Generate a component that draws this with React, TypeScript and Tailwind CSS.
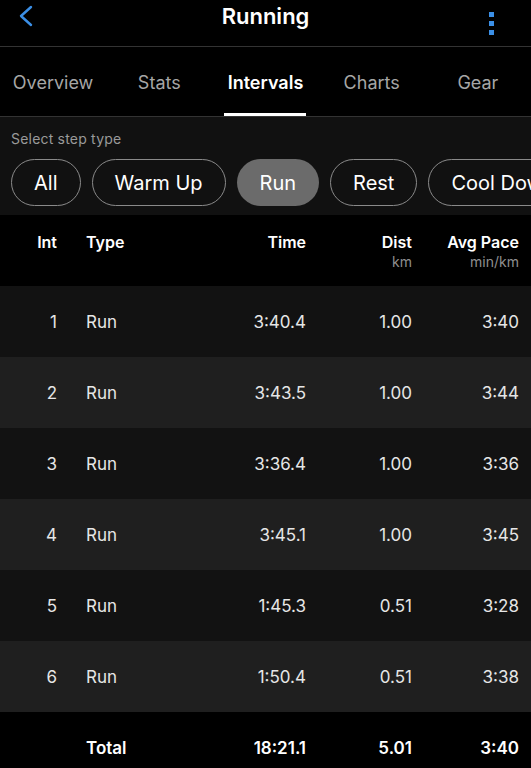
import React from "react";

const rows = [
  { i: "1", t: "3:40.4", d: "1.00", p: "3:40" },
  { i: "2", t: "3:43.5", d: "1.00", p: "3:44" },
  { i: "3", t: "3:36.4", d: "1.00", p: "3:36" },
  { i: "4", t: "3:45.1", d: "1.00", p: "3:45" },
  { i: "5", t: "1:45.3", d: "0.51", p: "3:28" },
  { i: "6", t: "1:50.4", d: "0.51", p: "3:38" },
];

const tabs = ["Overview", "Stats", "Intervals", "Charts", "Gear"];
const pills = ["All", "Warm Up", "Run", "Rest", "Cool Down"];

export default function App() {
  return (
    <div
      className="w-[531px] h-[768px] overflow-hidden bg-black text-white"
      style={{ fontFamily: "Inter, 'Noto Sans', sans-serif" }}
    >
      {/* Top bar */}
      <div className="relative h-[47px] flex items-center justify-center border-b border-[#333]">
        <svg className="absolute left-[18px] top-[5px]" width="16" height="22" viewBox="0 0 16 22">
          <path d="M13 2 L3 11 L13 20" fill="none" stroke="#3b8fe6" strokeWidth="2.4" strokeLinecap="round" strokeLinejoin="round" />
        </svg>
        <div className="text-[22px] font-semibold -mt-[13px]">Running</div>
        <div className="absolute right-[37px] top-[12px] flex flex-col gap-[4px]">
          <div className="w-[5px] h-[5px] bg-[#3b8fe6]" />
          <div className="w-[5px] h-[5px] bg-[#3b8fe6]" />
          <div className="w-[5px] h-[5px] bg-[#3b8fe6]" />
        </div>
      </div>

      {/* Tabs */}
      <div className="grid grid-cols-5 h-[70px] border-b border-[#333]">
        {tabs.map((t) => (
          <div key={t} className="relative flex items-center justify-center pt-[2px]">
            <span className={t === "Intervals" ? "text-[18px] font-semibold text-white" : "text-[18px] text-[#a6a6a6]"}>
              {t}
            </span>
            {t === "Intervals" && (
              <div className="absolute bottom-0 left-1/2 -translate-x-1/2 w-[82px] h-[3px] bg-white" />
            )}
          </div>
        ))}
      </div>

      {/* Filter */}
      <div className="bg-[#111] h-[98px] pt-[11px]">
        <div className="px-[11px] text-[14px] text-[#9a9a9a] tracking-[0.2px]">Select step type</div>
        <div className="flex gap-[11px] pl-[11px] mt-[10px] whitespace-nowrap">
          {pills.map((p) => (
            <div
              key={p}
              className={
                p === "Run"
                  ? "h-[47px] px-[23px] rounded-full bg-[#6b6b6b] flex items-center text-[20px] shrink-0"
                  : "h-[47px] px-[22px] rounded-full border border-[#8a8a8a] flex items-center text-[20px] shrink-0"
              }
            >
              {p}
            </div>
          ))}
        </div>
      </div>

      {/* Table header */}
      <div className="flex h-[71px] pt-[15px] text-[16px] font-semibold">
        <div className="w-[57px] text-right">Int</div>
        <div className="w-[100px] ml-[29px]">Type</div>
        <div className="w-[120px] text-right">Time</div>
        <div className="w-[106px] text-right flex flex-col items-end">
          <span>Dist</span>
          <span className="text-[14px] font-normal text-[#8f8f8f] leading-[16px]">km</span>
        </div>
        <div className="w-[107px] text-right flex flex-col items-end">
          <span>Avg Pace</span>
          <span className="text-[14px] font-normal text-[#8f8f8f] leading-[16px]">min/km</span>
        </div>
      </div>

      {rows.map((r, idx) => (
        <div
          key={r.i}
          className={
            (idx % 2 === 0 ? "bg-[#121212]" : "bg-[#1f1f1f]") +
            " flex items-center h-[71px] pt-[2px] text-[17px] text-[#e6e6e6]"
          }
        >
          <div className="w-[57px] text-right">{r.i}</div>
          <div className="w-[100px] ml-[29px]">Run</div>
          <div className="w-[120px] text-right">{r.t}</div>
          <div className="w-[106px] text-right">{r.d}</div>
          <div className="w-[107px] text-right">{r.p}</div>
        </div>
      ))}

      <div className="flex items-center h-[71px] pt-[2px] text-[17px] font-semibold">
        <div className="w-[57px] text-right"></div>
        <div className="w-[100px] ml-[29px]">Total</div>
        <div className="w-[120px] text-right">18:21.1</div>
        <div className="w-[106px] text-right">5.01</div>
        <div className="w-[107px] text-right">3:40</div>
      </div>
    </div>
  );
}
